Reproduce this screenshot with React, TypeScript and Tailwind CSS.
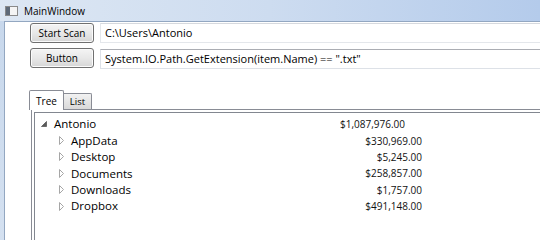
import React from 'react';

type Folder = { name: string; amount: string };

const children: Folder[] = [
  { name: 'AppData', amount: '$330,969.00' },
  { name: 'Desktop', amount: '$5,245.00' },
  { name: 'Documents', amount: '$258,857.00' },
  { name: 'Downloads', amount: '$1,757.00' },
  { name: 'Dropbox', amount: '$491,148.00' },
];

const ExpandedGlyph = () => (
  <svg width="6" height="6" viewBox="0 0 6 6">
    <path d="M5.5 0.5 L5.5 5.5 L0.5 5.5 Z" fill="#5a5a5a" stroke="#6a6a6a" strokeWidth="1" strokeLinejoin="round" />
  </svg>
);

const CollapsedGlyph = () => (
  <svg width="5" height="9" viewBox="0 0 5 9">
    <path d="M0.5 0.5 L4.5 4.5 L0.5 8.5 Z" fill="#ffffff" stroke="#a6a6a6" strokeWidth="1" />
  </svg>
);

const WindowIcon = () => (
  <svg width="13" height="10" viewBox="0 0 13 10">
    <rect x="0.5" y="0.5" width="12" height="9" fill="#f4f4f4" stroke="#8a8a8a" />
    <rect x="1" y="1" width="4" height="8" fill="#5f6a78" />
  </svg>
);

const AeroButton: React.FC<{ label: string }> = ({ label }) => (
  <button className="w-[64px] h-[20px] flex-shrink-0 rounded-[3px] border border-[#707070] bg-gradient-to-b from-[#f4f4f4] via-[#e8e8e8] to-[#d6d6d6] text-[10px] text-black leading-none shadow-[inset_0_0_0_1px_#fbfbfb]">
    {label}
  </button>
);

const TreeRow: React.FC<{ name: string; amount: string; expanded?: boolean; indent?: boolean }> = ({
  name,
  amount,
  expanded,
  indent,
}) => (
  <div className={`flex items-center h-[16.4px] ${indent ? 'ml-[17px]' : ''}`}>
    <div className="w-[16px] flex items-center justify-center">
      {expanded ? <ExpandedGlyph /> : <CollapsedGlyph />}
    </div>
    <div className="w-[353px] pl-[2px] flex items-center justify-between">
      <span className="text-[11.5px] text-black leading-none">{name}</span>
      <span className="text-[10px] text-[#111] leading-none">{amount}</span>
    </div>
  </div>
);

export default function App() {
  return (
    <div className="w-[540px] h-[240px] overflow-hidden flex flex-col bg-[#c9d9ee] font-['Open_Sans',sans-serif]">
      {/* Title bar */}
      <div className="h-[21px] flex-shrink-0 flex items-center gap-[6px] pl-[5px] bg-gradient-to-r from-[#dde7f3] via-[#cddcf0] to-[#b4cbeb]">
        <WindowIcon />
        <span className="text-[10px] text-black leading-none">MainWindow</span>
      </div>

      {/* Client area */}
      <div className="flex-1 flex">
        <div className="w-[4px] flex-shrink-0 bg-gradient-to-b from-[#c8d8ec] to-[#d6e2f1]" />
        <div className="flex-1 bg-white border-l border-t border-[#93a7c1] pt-[1px] pl-[25px] overflow-hidden">
          <div className="w-[560px]">
            <div className="flex items-center gap-[6px] h-[20px]">
              <AeroButton label="Start Scan" />
              <div className="flex-1 h-[20px] flex items-center pl-[4px] border border-[#e4e7eb] border-t-[#d6d9de] text-[11px] text-black whitespace-nowrap">
                C:\Users\Antonio
              </div>
            </div>
            <div className="flex items-center gap-[6px] h-[20px] mt-[5px]">
              <AeroButton label="Button" />
              <div className="flex-1 h-[20px] mt-[2px] flex items-center pl-[4px] border border-[#dde1e7] border-t-[#abadb3] text-[11px] text-black whitespace-nowrap">
                System.IO.Path.GetExtension(item.Name) == ".txt"
              </div>
            </div>

            {/* Tab control */}
            <div className="mt-[22px] ml-[1px]">
              <div className="flex items-end h-[19px] relative z-10">
                <div className="w-[35px] h-[20px] -ml-[2px] -mb-[1px] flex items-center justify-center bg-white border border-b-0 border-[#898c95] rounded-t-[2px] text-[10px] text-black leading-none">
                  Tree
                </div>
                <div className="w-[28px] h-[16px] flex items-center justify-center bg-gradient-to-b from-[#f2f2f2] to-[#d9d9d9] border border-l-0 border-b-0 border-[#898c95] rounded-tr-[2px] text-[9.5px] text-black leading-none">
                  List
                </div>
              </div>
              <div className="border border-[#898c95] bg-white pl-[2px] pt-[2px] h-[160px]">
                <div className="border border-[#828790] h-full pt-[3px] pl-[1px]">
                  <TreeRow name="Antonio" amount="$1,087,976.00" expanded />
                  {children.map((c) => (
                    <TreeRow key={c.name} name={c.name} amount={c.amount} indent />
                  ))}
                </div>
              </div>
            </div>
          </div>
        </div>
      </div>
    </div>
  );
}
